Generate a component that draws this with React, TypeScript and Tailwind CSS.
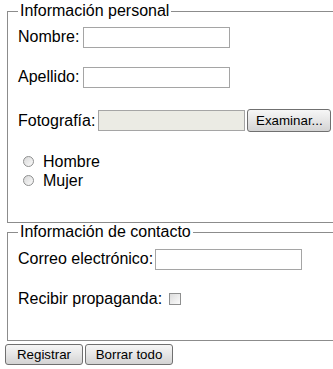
import React from 'react';

function TextBox({ gray }: { gray?: boolean }) {
  return (
    <span
      className={`inline-block w-[147px] h-[21px] border border-[#a5a5a5] ${gray ? 'bg-[#ebebe4]' : 'bg-white'}`}
    />
  );
}

function Btn({ children, className = '' }: { children: React.ReactNode; className?: string }) {
  return (
    <button
      type="button"
      className={`flex items-center justify-center border border-[#707070] rounded-[3px] bg-gradient-to-b from-[#f6f6f6] via-[#e6e6e6] to-[#d3d3d3] text-[13.33px] text-black leading-none ${className}`}
    >
      {children}
    </button>
  );
}

function Radio({ label }: { label: string }) {
  return (
    <div className="flex items-center h-[19px]">
      <span className="ml-[5px] w-[11px] h-[11px] rounded-full border border-[#8e8f8f] bg-gradient-to-br from-[#d8d8d8] to-[#fbfbfb]" />
      <span className="ml-[9px]">{label}</span>
    </div>
  );
}

export default function App() {
  return (
    <div className="w-[333px] h-[369px] overflow-hidden bg-white text-black text-[16px] font-['Liberation_Sans',Arial,sans-serif] leading-[18px] pt-[2px]">
      {/* Información personal */}
      <fieldset className="ml-[7px] w-[420px] border border-[#8c8c8c] pl-[10px] pb-[32px]">
        <legend className="px-[2px]">Información personal</legend>

        <div className="flex items-center h-[22px] mt-[6px] gap-[4px]">
          <span>Nombre:</span>
          <TextBox />
        </div>

        <div className="flex items-center h-[22px] mt-[18px] gap-[4px]">
          <span>Apellido:</span>
          <TextBox />
        </div>

        <div className="flex items-center h-[23px] mt-[21px] gap-[3px]">
          <span>Fotografía:</span>
          <TextBox gray />
          <Btn className="w-[84px] h-[23px] -ml-[1px]">Examinar...</Btn>
        </div>

        <div className="mt-[20px]">
          <Radio label="Hombre" />
          <Radio label="Mujer" />
        </div>
      </fieldset>

      {/* Información de contacto */}
      <fieldset className="ml-[7px] w-[420px] border border-[#8c8c8c] pl-[10px] pb-[30px]">
        <legend className="px-[2px]">Información de contacto</legend>

        <div className="flex items-center h-[22px] mt-[7px] gap-[2px]">
          <span>Correo electrónico:</span>
          <TextBox />
        </div>

        <div className="flex items-center h-[22px] mt-[18px]">
          <span>Recibir propaganda:</span>
          <span className="ml-[7px] w-[12px] h-[12px] border border-[#8e8f8f] bg-gradient-to-br from-[#dcdcdc] to-[#fbfbfb]" />
        </div>
      </fieldset>

      <div className="flex gap-[2px] ml-[5px] mt-[3px]">
        <Btn className="w-[78px] h-[21px]">Registrar</Btn>
        <Btn className="w-[88px] h-[21px]">Borrar todo</Btn>
      </div>
    </div>
  );
}
